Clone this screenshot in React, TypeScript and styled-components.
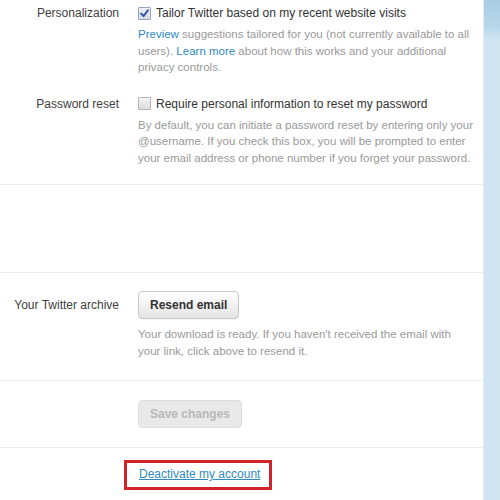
import styled, { createGlobalStyle } from "styled-components";

const GlobalStyle = createGlobalStyle`
    html, body {
        margin: 0;
        padding: 0;
        background: #ffffff;
    }
    body {
        font-family: "Liberation Sans", Arial, sans-serif;
        -webkit-font-smoothing: antialiased;
    }
`;

const Page = styled.div`
    display: flex;
    width: 500px;
    height: 500px;
    overflow: hidden;
`;

const Panel = styled.div`
    width: 483px;
    background: #ffffff;
    display: flex;
    flex-direction: column;
`;

const Sidebar = styled.div`
    flex: 1;
    border-left: 1px solid #e3edf4;
    background: linear-gradient(
        to bottom,
        #a8cce2 0px,
        #b9d7ea 28px,
        #d0e4f1 40px,
        #d0e4f1 100%
    );
`;

const Section = styled.div<{ $pt: number; $pb: number; $minH?: number }>`
    padding: ${(p) => p.$pt}px 0 ${(p) => p.$pb}px;
    min-height: ${(p) => p.$minH ?? 0}px;
    border-bottom: 1px solid #ececec;
    display: flex;
    flex-direction: column;
    gap: 19px;

    &:last-child {
        border-bottom: none;
    }
`;

const Row = styled.div`
    display: grid;
    grid-template-columns: 119px 1fr;
    column-gap: 19px;
    padding-right: 8px;
`;

const Label = styled.div<{ $top?: number }>`
    text-align: right;
    font-size: 12px;
    line-height: 18px;
    color: #404040;
    padding-top: ${(p) => p.$top ?? 0}px;
`;

const Field = styled.div`
    display: flex;
    flex-direction: column;
`;

const CheckLine = styled.label`
    display: flex;
    align-items: center;
    gap: 5px;
    font-size: 12px;
    line-height: 18px;
    color: #333333;
`;

const Box = styled.span<{ $checked?: boolean }>`
    width: 13px;
    height: 13px;
    box-sizing: border-box;
    border: 1px solid ${(p) => (p.$checked ? "#9aa6b4" : "#b4b4b4")};
    border-radius: 1px;
    background: ${(p) =>
        p.$checked
            ? "linear-gradient(#eef1f6, #d7dde6)"
            : "linear-gradient(#f4f4f4, #dcdcdc)"};
    display: flex;
    align-items: center;
    justify-content: center;
`;

const Help = styled.p<{ $mt: number }>`
    margin: ${(p) => p.$mt}px 0 0;
    font-size: 11.5px;
    line-height: 16.5px;
    color: #999999;

    a {
        color: #2f8ac0;
        text-decoration: none;
    }
`;

const Button = styled.button<{ $disabled?: boolean }>`
    align-self: flex-start;
    height: 28px;
    padding: 0 11px;
    font-family: "Liberation Sans", Arial, sans-serif;
    font-size: 12px;
    font-weight: bold;
    border-radius: 4px;
    border: 1px solid ${(p) => (p.$disabled ? "#dddddd" : "#c8c8c8")};
    color: ${(p) => (p.$disabled ? "#b8b8b8" : "#333333")};
    background: ${(p) =>
        p.$disabled
            ? "#e9e9e9"
            : "linear-gradient(#ffffff, #e4e4e4)"};
    box-shadow: ${(p) => (p.$disabled ? "none" : "0 1px 0 rgba(0,0,0,0.05)")};
`;

const Highlight = styled.span`
    align-self: flex-start;
    margin-left: -14px;
    border: 3px solid #d2232a;
    padding: 5px 9px 6px 12px;
    font-size: 12px;
    line-height: 13px;

    a {
        color: #2f8ac0;
        text-decoration: underline;
    }
`;

const Check = () => (
    <svg width="9" height="9" viewBox="0 0 9 9">
        <path
            d="M1.2 4.6 L3.5 7.2 L7.9 1.3"
            fill="none"
            stroke="#3a57a8"
            strokeWidth="2"
            strokeLinecap="round"
            strokeLinejoin="round"
        />
    </svg>
);

export default function App() {
    return (
        <Page>
            <GlobalStyle />
            <Panel>
                <Section $pt={4} $pb={19}>
                    <Row>
                        <Label>Personalization</Label>
                        <Field>
                            <CheckLine>
                                <Box $checked>
                                    <Check />
                                </Box>
                                Tailor Twitter based on my recent website visits
                            </CheckLine>
                            <Help $mt={4}>
                                <a href="#">Preview</a> suggestions tailored for you
                                (not currently available to all users).{" "}
                                <a href="#">Learn more</a> about how this works and
                                your additional privacy controls.
                            </Help>
                        </Field>
                    </Row>
                    <Row>
                        <Label>Password reset</Label>
                        <Field>
                            <CheckLine>
                                <Box />
                                Require personal information to reset my password
                            </CheckLine>
                            <Help $mt={4}>
                                By default, you can initiate a password reset by
                                entering only your @username. If you check this box,
                                you will be prompted to enter your email address or
                                phone number if you forget your password.
                            </Help>
                        </Field>
                    </Row>
                </Section>
                <Section $pt={0} $pb={0} $minH={87} />
                <Section $pt={18} $pb={21}>
                    <Row>
                        <Label $top={5}>Your Twitter archive</Label>
                        <Field>
                            <Button>Resend email</Button>
                            <Help $mt={7}>
                                Your download is ready. If you haven't received the
                                email with your link, click above to resend it.
                            </Help>
                        </Field>
                    </Row>
                </Section>
                <Section $pt={19} $pb={19}>
                    <Row>
                        <div />
                        <Field>
                            <Button $disabled disabled>
                                Save changes
                            </Button>
                        </Field>
                    </Row>
                </Section>
                <Section $pt={12} $pb={10}>
                    <Row>
                        <div />
                        <Field>
                            <Highlight>
                                <a href="#">Deactivate my account</a>
                            </Highlight>
                        </Field>
                    </Row>
                </Section>
            </Panel>
            <Sidebar />
        </Page>
    );
}
